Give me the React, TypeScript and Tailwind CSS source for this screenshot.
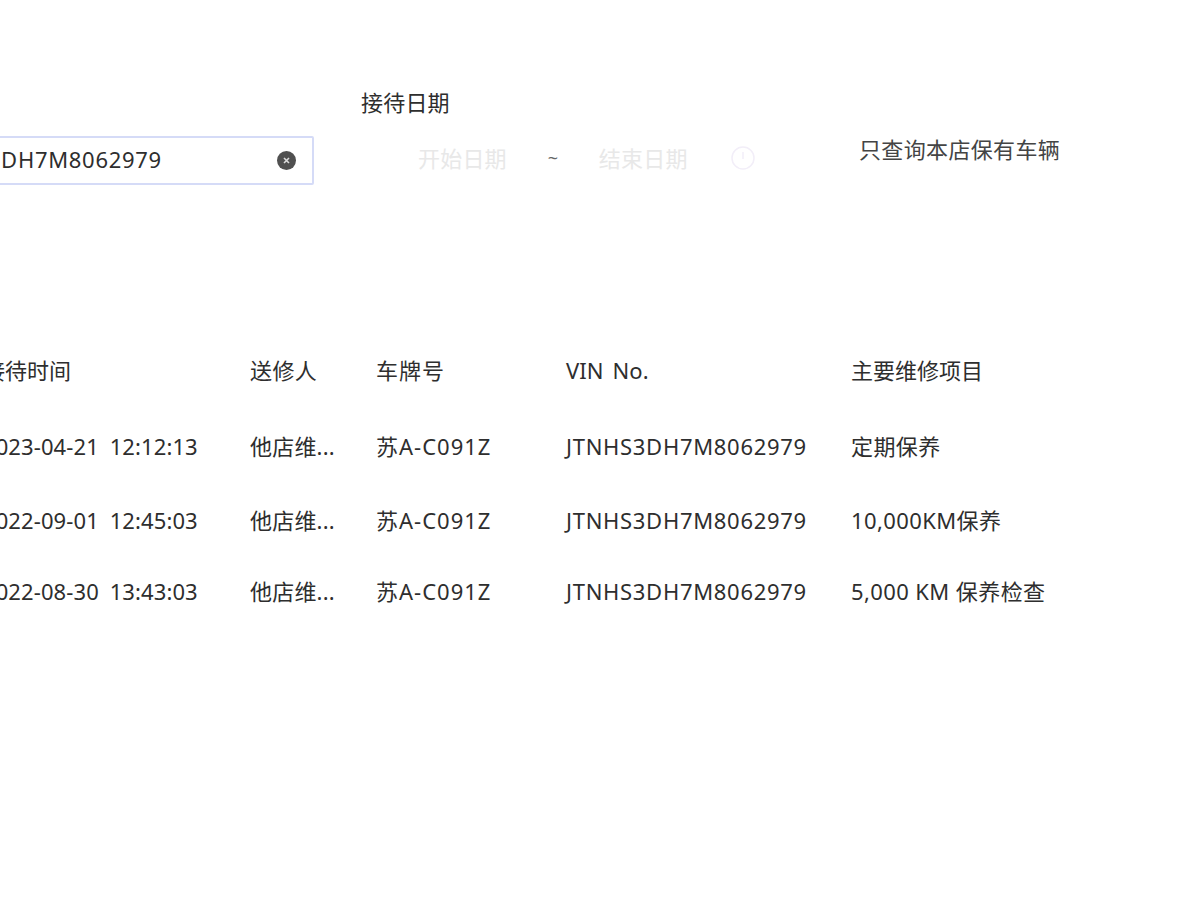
const font = "font-['Noto_Sans','Noto_Sans_CJK_SC',sans-serif]";

const rows = [
  ["2023-04-21 12:12:13", "他店维...", "苏A-C091Z", "JTNHS3DH7M8062979", "定期保养"],
  ["2022-09-01 12:45:03", "他店维...", "苏A-C091Z", "JTNHS3DH7M8062979", "10,000KM保养"],
  ["2022-08-30 13:43:03", "他店维...", "苏A-C091Z", "JTNHS3DH7M8062979", "5,000 KM 保养检查"],
];

const rowHeights = ["h-[74px]", "h-[71px]", "h-[69px]"];
const cellStyles = ["tracking-[0.1px] [word-spacing:5px]", "tracking-[0.2px]", "tracking-[1px]", "tracking-[0.7px]", "tracking-[0.4px]"];

function Cell({ className = "", children }: { className?: string; children: React.ReactNode }) {
  return <div className={`whitespace-nowrap ${className}`}>{children}</div>;
}

export default function App() {
  return (
    <div className={`h-[900px] w-[1200px] overflow-hidden bg-white text-[22px] leading-[30px] text-[#2e2e2e] ${font}`}>
      {/* Filter form */}
      <div className="flex pt-[87px]">
        <div className="ml-[-200px] w-[514px] pt-[49px]">
          <div className="flex h-[49px] items-center justify-between rounded-[2px] border-2 border-[#d5dbf7] pr-[16px]">
            <span className="ml-[119px] whitespace-nowrap pb-[3px] tracking-[0.7px]">JTNHS3DH7M8062979</span>
            <span className="flex h-[19px] w-[19px] items-center justify-center rounded-full bg-[#505050] text-[#ddd]">
              <svg width="7" height="7" viewBox="0 0 7 7" fill="none" stroke="currentColor" strokeWidth="1.6">
                <path d="M1 1l5 5M6 1l-5 5" />
              </svg>
            </span>
          </div>
        </div>
        <div className="ml-[47px] w-[498px]">
          <div className="tracking-[0.2px]">接待日期</div>
          <div className="mt-[26px] flex items-center text-[#e8e8e8]">
            <span className="ml-[57px] tracking-[0.2px]">开始日期</span>
            <span className="ml-[41px] w-[12px] text-[18px] text-[#666]">~</span>
            <span className="ml-[39px] tracking-[0.2px]">结束日期</span>
            <svg className="ml-[43px]" width="24" height="24" viewBox="0 0 24 24" fill="none" stroke="#f2eef8" strokeWidth="1.5">
              <circle cx="12" cy="12" r="11" />
              <path d="M12 6v7" />
            </svg>
          </div>
        </div>
        <div className="pt-[47px] whitespace-nowrap tracking-[0.35px] text-[#444]">只查询本店保有车辆</div>
      </div>

      {/* Repair records */}
      <div className="ml-[-17px] mt-[170px]">
        <div className="grid h-[76px] grid-cols-[267px_126px_190px_285px_1fr]">
          <Cell>接待时间</Cell>
          <Cell className="tracking-[0.4px]">送修人</Cell>
          <Cell className="tracking-[1px]">车牌号</Cell>
          <Cell className="[word-spacing:3.5px]">VIN No.</Cell>
          <Cell>主要维修项目</Cell>
        </div>
        {rows.map((row, i) => (
          <div key={i} className={`grid grid-cols-[267px_126px_190px_285px_1fr] ${rowHeights[i]}`}>
            {row.map((text, j) => (
              <Cell key={j} className={cellStyles[j]}>
                {text}
              </Cell>
            ))}
          </div>
        ))}
      </div>
    </div>
  );
}
